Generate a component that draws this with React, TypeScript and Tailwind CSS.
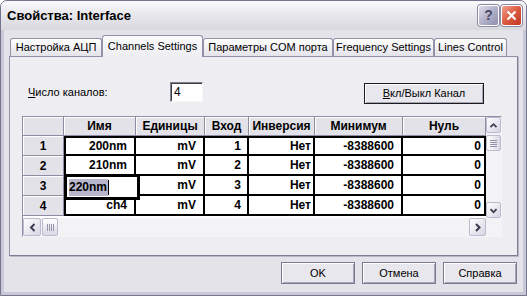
import React from 'react';

const headers = ['', 'Имя', 'Единицы', 'Вход', 'Инверсия', 'Минимум', 'Нуль'];

const rows = [
  ['1', '200nm', 'mV', '1', 'Нет', '-8388600', '0'],
  ['2', '210nm', 'mV', '2', 'Нет', '-8388600', '0'],
  ['3', '220nm', 'mV', '3', 'Нет', '-8388600', '0'],
  ['4', 'ch4', 'mV', '4', 'Нет', '-8388600', '0'],
];

// right padding per data column, measured from the reference
const padRight = ['', 'pr-[7px]', 'pr-[7px]', 'pr-[6px]', 'pr-[2px]', 'pr-[7px]', 'pr-[3px]'];

const tabs = [
  { label: 'Настройка АЦП', w: 'w-[92px]', active: false },
  { label: 'Channels Settings', w: 'w-[101px]', active: true },
  { label: 'Параметры COM порта', w: 'w-[130px]', active: false },
  { label: 'Frequency Settings', w: 'w-[101px]', active: false },
  { label: 'Lines Control', w: 'w-[73px]', active: false },
];

function Chevron({ dir }: { dir: 'up' | 'down' | 'left' | 'right' }) {
  const d = {
    up: 'M4 9.5 L7.5 6 L11 9.5',
    down: 'M4 6 L7.5 9.5 L11 6',
    left: 'M9.5 4 L6 7.5 L9.5 11',
    right: 'M6 4 L9.5 7.5 L6 11',
  }[dir];
  return (
    <svg width="15" height="15" viewBox="0 0 15 15">
      <path d={d} fill="none" stroke="#3c3b52" strokeWidth="2" />
    </svg>
  );
}

function ScrollBtn({ dir, className }: { dir: 'up' | 'down' | 'left' | 'right'; className: string }) {
  return (
    <div
      className={`${className} flex items-center justify-center rounded-[2px] border border-[#bcbbcf] bg-gradient-to-br from-[#ffffff] to-[#d6d5e2]`}
    >
      <Chevron dir={dir} />
    </div>
  );
}

function Grip({ vertical }: { vertical: boolean }) {
  return vertical ? (
    <div className="flex flex-col gap-[1px]">
      <div className="w-[7px] h-px bg-[#9594ab]" />
      <div className="w-[7px] h-px bg-[#9594ab]" />
      <div className="w-[7px] h-px bg-[#9594ab]" />
      <div className="w-[7px] h-px bg-[#9594ab]" />
    </div>
  ) : (
    <div className="flex gap-[1px]">
      <div className="h-[7px] w-px bg-[#9594ab]" />
      <div className="h-[7px] w-px bg-[#9594ab]" />
      <div className="h-[7px] w-px bg-[#9594ab]" />
      <div className="h-[7px] w-px bg-[#9594ab]" />
    </div>
  );
}

function Button({ children, className }: { children: React.ReactNode; className: string }) {
  return (
    <div
      className={`${className} flex items-center justify-center border bg-[#e8e7ee] shadow-[inset_1px_1px_0_#ffffff,inset_-1px_-1px_0_#a7a6b8] text-[11px] text-black`}
    >
      {children}
    </div>
  );
}

function DataGrid() {
  return (
    <div className="ml-[12px] mt-[13px] w-[480px] border border-[#8f8ea4] border-r-[#f4f4f8] border-b-[#f4f4f8] bg-white">
      <div className="flex">
        <div className="w-[464px] h-[101px] bg-white">
          <div className="grid grid-cols-[41px_72px_69px_44px_66px_88px_83px] grid-rows-[19px_20px_20px_20px_20px]">
            {headers.map((h, i) => (
              <div
                key={`h${i}`}
                className="flex items-center justify-center bg-[#e3e2e9] border-r border-b border-[#8d8ca0] shadow-[inset_1px_1px_0_#ffffff] text-[12px] font-bold text-black"
              >
                {h}
              </div>
            ))}
            {rows.map((r, ri) =>
              r.map((v, ci) => {
                if (ci === 0) {
                  return (
                    <div
                      key={`${ri}-${ci}`}
                      className="flex items-center justify-center bg-[#e3e2e9] border-r border-b border-[#8d8ca0] shadow-[inset_1px_1px_0_#ffffff] text-[12px] font-bold text-black"
                    >
                      {v}
                    </div>
                  );
                }
                const top = ri === 0 ? 'border-t-2' : '';
                const left = ci === 1 ? 'border-l-2' : '';
                const editing = ri === 2 && ci === 1;
                return (
                  <div
                    key={`${ri}-${ci}`}
                    className={`relative flex items-center justify-end bg-white border-r-2 border-b-2 border-black ${top} ${left} ${padRight[ci]} text-[12px] font-bold text-black`}
                  >
                    {editing ? (
                      <div className="absolute left-[-2px] top-[-2px] z-10 flex h-[26px] w-[76px] items-center border-[3px] border-black bg-white pl-[2px]">
                        <span className="flex h-[17px] items-center bg-[#b7b6cc] pr-px">220nm</span>
                        <span className="h-[15px] w-px bg-black" />
                      </div>
                    ) : (
                      v
                    )}
                  </div>
                );
              })
            )}
          </div>
        </div>
        <div className="flex w-[15px] h-[101px] flex-col bg-[#f3f3f6]">
          <ScrollBtn dir="up" className="h-[16px] w-[15px]" />
          <div className="mt-[2px] flex h-[16px] w-[15px] items-center justify-center rounded-[2px] border border-[#bcbbcf] bg-gradient-to-r from-[#ffffff] to-[#d9d8e4]">
            <Grip vertical />
          </div>
          <div className="flex-1" />
          <ScrollBtn dir="down" className="h-[16px] w-[15px]" />
        </div>
      </div>
      <div className="flex h-[18px] bg-[#f3f3f6]">
        <ScrollBtn dir="left" className="h-[18px] w-[18px]" />
        <div className="ml-[1px] flex h-[18px] w-[16px] items-center justify-center rounded-[2px] border border-[#bcbbcf] bg-gradient-to-b from-[#ffffff] to-[#d9d8e4]">
          <Grip vertical={false} />
        </div>
        <div className="flex-1" />
        <ScrollBtn dir="right" className="h-[18px] w-[17px]" />
        <div className="w-[15px] bg-[#f3f3f6]" />
      </div>
    </div>
  );
}

export default function App() {
  return (
    <div className="flex h-[296px] w-[527px] flex-col overflow-hidden rounded-t-[7px] border border-[#75748e] bg-[#e4e3ea] font-['Liberation_Sans',Arial,sans-serif] text-black">
      {/* title bar */}
      <div className="flex h-[29px] shrink-0 items-center justify-between bg-gradient-to-b from-[#fafafc] via-[#e6e6eb] to-[#d8d8df] pl-[6px] pr-[4px]">
        <span className="text-[13px] font-bold text-black">Свойства: Interface</span>
        <div className="flex gap-[2px]">
          <div className="flex h-[21px] w-[21px] items-center justify-center rounded-[3px] border border-white bg-gradient-to-br from-[#dcdcea] via-[#b3b2cb] to-[#8e8dab] text-[14px] font-bold text-[#4b4a63] shadow-[0_0_0_1px_#8b8aa3]">
            ?
          </div>
          <div className="flex h-[21px] w-[21px] items-center justify-center rounded-[3px] border border-white bg-gradient-to-br from-[#efa08c] via-[#db5a41] to-[#bf3622] shadow-[0_0_0_1px_#8b8aa3]">
            <svg width="13" height="13" viewBox="0 0 13 13">
              <path d="M2.5 2.5 L10.5 10.5 M10.5 2.5 L2.5 10.5" stroke="#ffffff" strokeWidth="2.2" />
            </svg>
          </div>
        </div>
      </div>

      {/* body with window frame */}
      <div className="flex flex-1 flex-col border-x-[3px] border-b-[3px] border-[#c9c8d6] pt-[5px]">
        {/* tabs */}
        <div className="relative z-10 ml-[6px] flex h-[21px] items-end">
          {tabs.map((t) =>
            t.active ? (
              <div
                key={t.label}
                className={`${t.w} -mb-px flex h-[22px] items-start justify-center rounded-t-[3px] border-x border-t border-[#9291a7] bg-gradient-to-b from-[#fbfbfd] to-[#eeedf2] pt-[2px] text-[11px]`}
              >
                {t.label}
              </div>
            ) : (
              <div
                key={t.label}
                className={`${t.w} flex h-[18px] items-center justify-center rounded-t-[3px] border-x border-t border-[#9291a7] bg-gradient-to-b from-[#ffffff] to-[#e4e3ea] text-[11px]`}
              >
                {t.label}
              </div>
            )
          )}
        </div>

        {/* tab panel */}
        <div className="ml-[5px] flex h-[200px] w-[509px] flex-col border border-[#9291a7] border-r-[#7e7d94] border-b-[#7e7d94] bg-[#eeedf2] shadow-[1px_1px_0_#b9b8c8]">
          <div className="ml-[18px] mt-[24px] flex h-[22px] items-center">
            <span className="w-[142px] text-[11px]">
              <span className="underline">Ч</span>исло каналов:
            </span>
            <div className="flex h-[20px] w-[33px] items-center border border-[#7f7e93] border-r-[#f6f6f8] border-b-[#f6f6f8] bg-white pl-[3px] text-[12px] shadow-[inset_1px_1px_0_#404040]">
              4
            </div>
            <Button className="ml-[161px] mt-[2px] h-[21px] w-[120px] border-[#1c1c1c]">
              <span className="underline">В</span>кл/Выкл Канал
            </Button>
          </div>
          <DataGrid />
        </div>

        {/* bottom buttons */}
        <div className="mt-[6px] flex justify-end gap-[7px] pr-[6px]">
          <Button className="h-[22px] w-[74px] border-[#7a7990]">OK</Button>
          <Button className="h-[22px] w-[74px] border-[#7a7990]">Отмена</Button>
          <Button className="h-[22px] w-[74px] border-[#7a7990]">Справка</Button>
        </div>
      </div>
    </div>
  );
}
